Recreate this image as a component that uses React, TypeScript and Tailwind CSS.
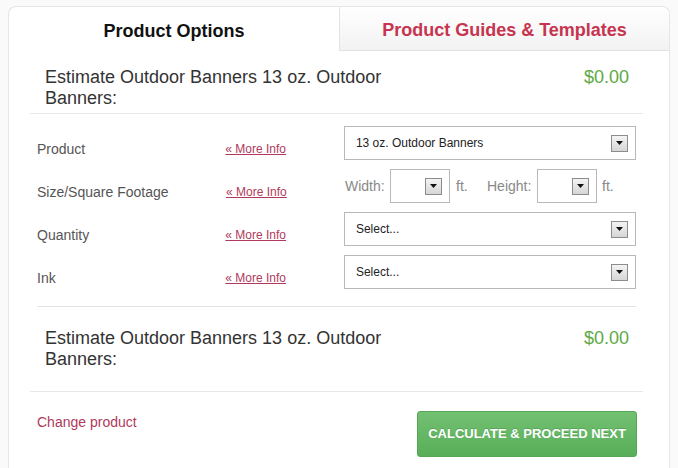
import React from "react";

const FONT = { fontFamily: '"Liberation Sans", Arial, sans-serif' };

type Row = { label: string; kind: "select" | "size"; value?: string };

const ROWS: Row[] = [
  { label: "Product", kind: "select", value: "13 oz. Outdoor Banners" },
  { label: "Size/Square Footage", kind: "size" },
  { label: "Quantity", kind: "select", value: "Select..." },
  { label: "Ink", kind: "select", value: "Select..." },
];

// little grey arrow box that old-style selects show on the right
function ArrowBox() {
  return (
    <span className="flex h-[17px] w-[17px] items-center justify-center border border-[#8c8c8c] bg-gradient-to-b from-[#f4f4f4] to-[#d6d6d6]">
      <svg width="7" height="4" viewBox="0 0 7 4">
        <path d="M0 0h7L3.5 4z" fill="#111" />
      </svg>
    </span>
  );
}

function FakeSelect({ value, className }: { value?: string; className: string }) {
  return (
    <div className={`flex h-[34px] items-center justify-between border border-[#b8b8b8] bg-white pl-[11px] pr-[7px] ${className}`}>
      <span className="text-[12px] text-[#222]">{value}</span>
      <ArrowBox />
    </div>
  );
}

function Estimate({ top, bottom }: { top: string; bottom: string }) {
  return (
    <div className={`flex items-start justify-between pl-[15px] pr-[14px] ${top} ${bottom}`}>
      <div className="w-[360px] text-[18px] leading-[21px] text-[#333]">
        Estimate Outdoor Banners 13 oz. Outdoor Banners:
      </div>
      <div className="text-[18px] leading-[21px] text-[#5ea945]">$0.00</div>
    </div>
  );
}

export default function App() {
  return (
    <div className="min-h-[468px] bg-[#fafafa] pl-[8px] pt-[6px]" style={FONT}>
      <div className="w-[662px] rounded-t-[8px] border border-b-0 border-[#e6e6e6] bg-white">
        {/* tabs */}
        <div className="flex h-[44px]">
          <div className="flex w-[330px] items-center justify-center pt-[4px] text-[18px] font-bold text-[#111]">
            Product Options
          </div>
          <div className="flex flex-1 items-center justify-center rounded-tr-[8px] border-b border-l border-[#e3e3e3] bg-gradient-to-b from-white to-[#f2f2f2] pt-[4px] text-[18px] font-bold text-[#c6344f]">
            Product Guides &amp; Templates
          </div>
        </div>

        <div className="pl-[21px] pr-[26px]">
          <div className="border-b border-[#e8e8e8]">
            <Estimate top="pt-[16px]" bottom="pb-[4px]" />
          </div>

          {/* option rows */}
          <div className="mx-[7px] flex flex-col gap-[9px] border-b border-[#e3e3e3] pb-[17px] pt-[12px]">
            {ROWS.map((r) => (
              <div key={r.label} className="flex items-start">
                <div className="w-[189px] pt-[15px] text-[14px] leading-[16px] text-[#555]">{r.label}</div>
                <a className="w-[119px] pt-[16px] text-[12px] leading-[14px] text-[#b03a5c] underline">« More Info</a>
                {r.kind === "select" ? (
                  <FakeSelect value={r.value} className="w-[293px]" />
                ) : (
                  <div className="flex items-center text-[14px] text-[#888]">
                    <span className="w-[45px]">Width:</span>
                    <FakeSelect className="w-[60px]" />
                    <span className="ml-[6px] w-[31px]">ft.</span>
                    <span className="w-[50px]">Height:</span>
                    <FakeSelect className="w-[60px]" />
                    <span className="ml-[5px]">ft.</span>
                  </div>
                )}
              </div>
            ))}
          </div>

          <div className="border-b border-[#e8e8e8]">
            <Estimate top="pt-[21px]" bottom="pb-[21px]" />
          </div>

          {/* footer */}
          <div className="flex items-start justify-between pl-[7px] pr-[6px] pt-[19px] pb-[12px]">
            <a className="pt-[1px] text-[14px] text-[#b03a5c]">Change product</a>
            <button
              type="button"
              className="flex h-[46px] w-[220px] items-center justify-center rounded-[3px] border border-[#55a555] bg-gradient-to-b from-[#72c072] to-[#58ae58] text-[13px] font-bold text-white [text-shadow:0_-1px_0_rgba(0,0,0,0.15)]"
            >
              CALCULATE &amp; PROCEED NEXT
            </button>
          </div>
        </div>
      </div>
    </div>
  );
}
